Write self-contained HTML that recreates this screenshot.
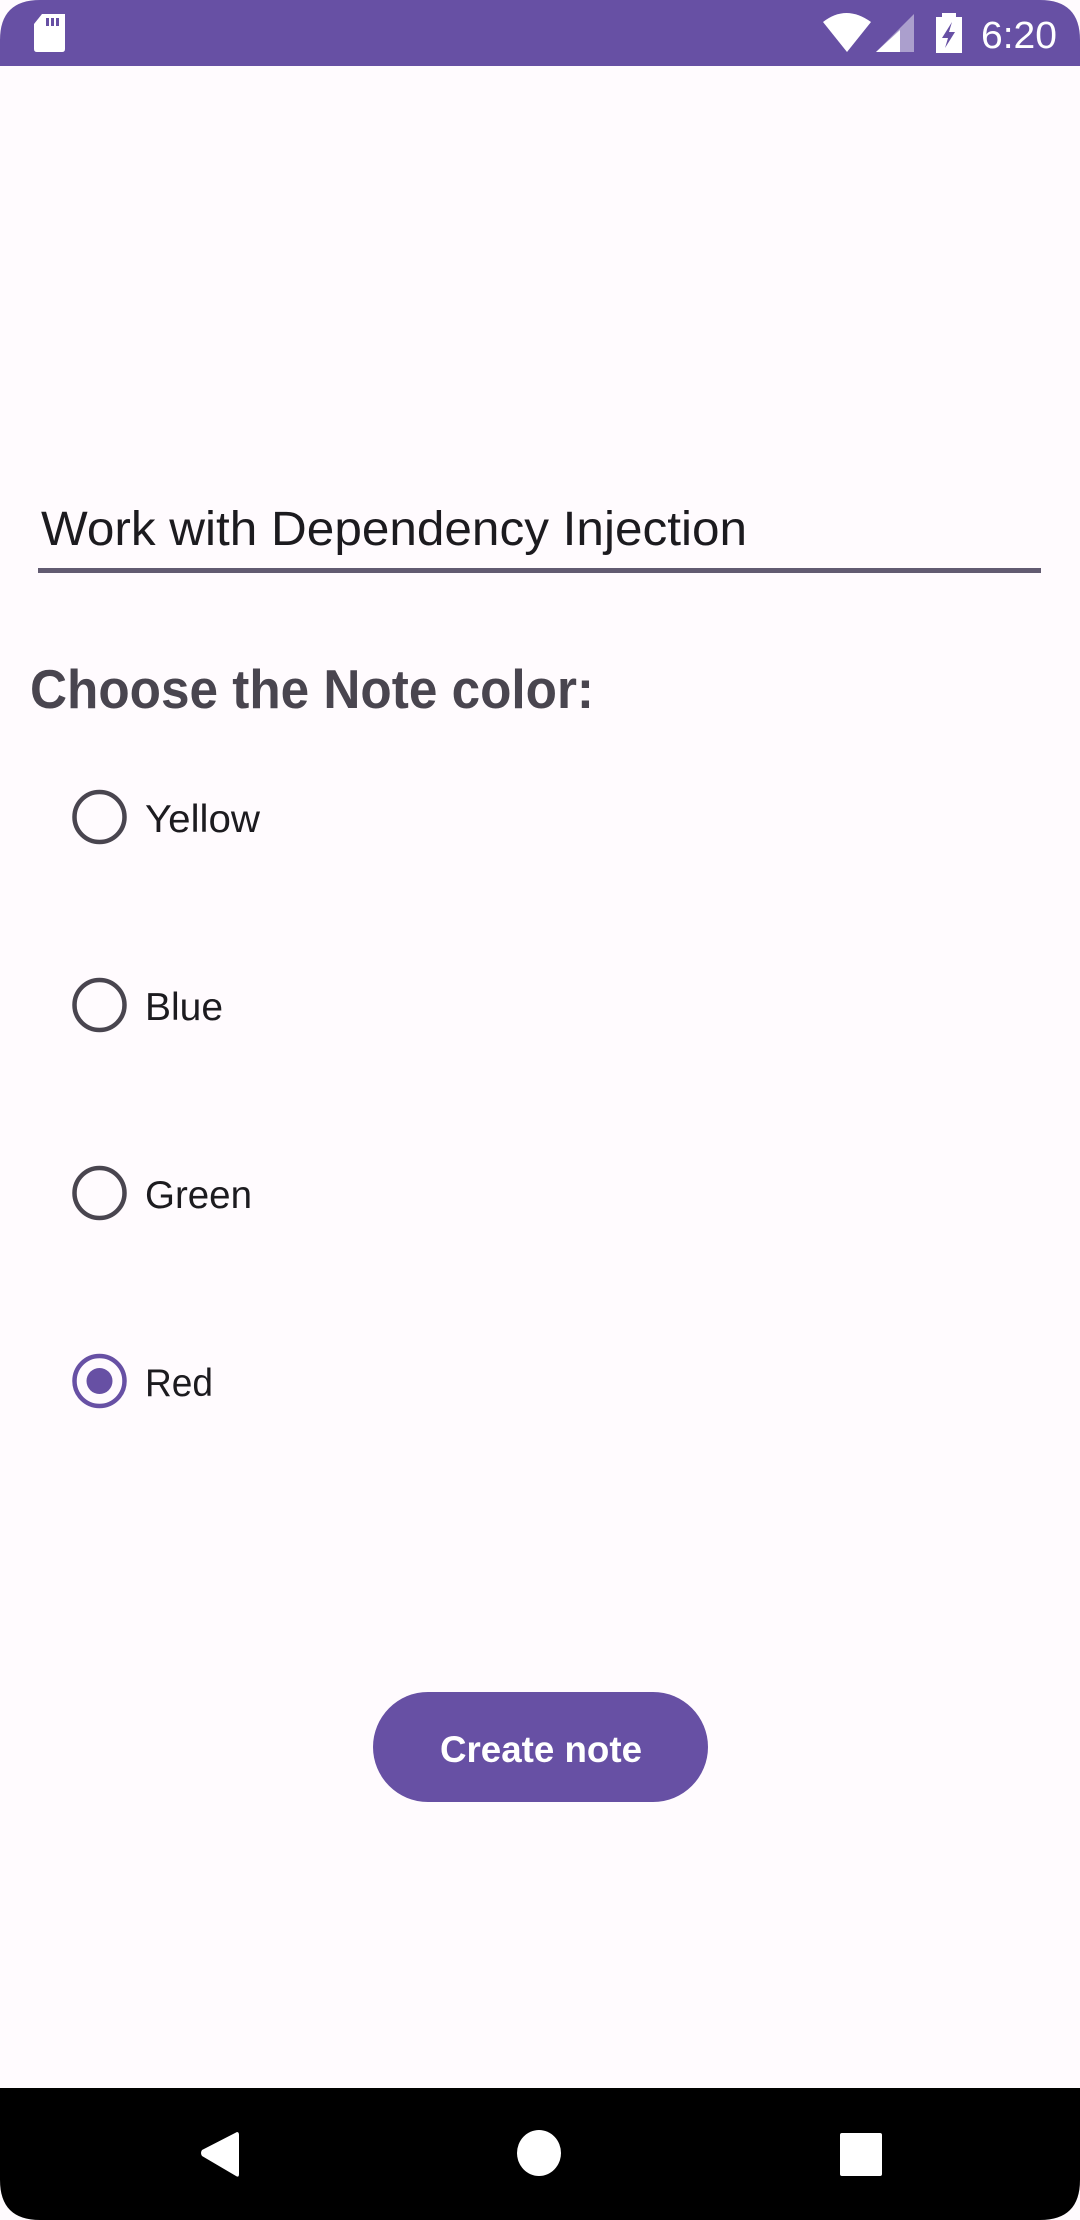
<!DOCTYPE html>
<html><head><meta charset="utf-8"><style>
html,body{margin:0;padding:0;background:#fffbfe;}
body{width:1080px;height:2220px;overflow:hidden;position:relative;}
svg{position:absolute;left:0;top:0;}
</style></head><body>
<svg width="1080" height="2220" viewBox="0 0 1080 2220" xmlns="http://www.w3.org/2000/svg">
<rect width="1080" height="2220" fill="#fffbfe"/>
<!-- status bar -->
<path d="M0 66 V40 Q0 0 40 0 H1040 Q1080 0 1080 40 V66 Z" fill="#6750a4"/>
<path d="M42 14 H65 V49 Q65 52 62 52 H37 Q34 52 34 49 V24 Z" fill="#fff"/>
<rect x="46" y="18" width="3" height="8" fill="#6750a4"/><rect x="51" y="18" width="3" height="8" fill="#6750a4"/><rect x="56" y="18" width="3" height="8" fill="#6750a4"/>
<path d="M823 22 Q846 4 871 22 L847 52 Z" fill="#fff"/>
<path d="M914 14 V52 H876 Z" fill="#fff" opacity="0.45"/>
<path d="M900 30 V52 H876 Z" fill="#fff"/>
<rect x="942" y="13" width="14" height="4" fill="#fff"/>
<rect x="936" y="17" width="26" height="36" fill="#fff"/>
<path d="M952 22 L942 38 H948 L945 48 L955 32 H949 Z" fill="#6750a4"/>
<text x="981" y="48" font-family="Liberation Sans, sans-serif" font-size="38" fill="#fff" textLength="76" lengthAdjust="spacingAndGlyphs">6:20</text>
<!-- text field -->
<text x="41" y="545" font-family="Liberation Sans, sans-serif" font-size="48" fill="#1c1b1f" textLength="706" lengthAdjust="spacingAndGlyphs">Work with Dependency Injection</text>
<rect x="38" y="568" width="1003" height="5" fill="#625b71"/>
<!-- heading -->
<text x="30" y="708" font-family="Liberation Sans, sans-serif" font-weight="bold" font-size="55" fill="#49454f" textLength="564" lengthAdjust="spacingAndGlyphs">Choose the Note color:</text>
<!-- radios -->
<g fill="none" stroke="#49454f" stroke-width="4.5">
<circle cx="99.5" cy="817" r="25"/>
<circle cx="99.5" cy="1005" r="25"/>
<circle cx="99.5" cy="1193" r="25"/>
</g>
<circle cx="99.5" cy="1381" r="25" fill="none" stroke="#6750a4" stroke-width="4.5"/>
<circle cx="99.5" cy="1381" r="13" fill="#6750a4"/>
<g font-family="Liberation Sans, sans-serif" font-size="39" fill="#1c1b1f">
<text x="145" y="832" textLength="115" lengthAdjust="spacingAndGlyphs">Yellow</text>
<text x="145" y="1020" textLength="78" lengthAdjust="spacingAndGlyphs">Blue</text>
<text x="145" y="1208" textLength="107" lengthAdjust="spacingAndGlyphs">Green</text>
<text x="145" y="1396" textLength="68" lengthAdjust="spacingAndGlyphs">Red</text>
</g>
<!-- button -->
<rect x="373" y="1692" width="335" height="110" rx="55" fill="#6750a4"/>
<text x="440" y="1762" font-family="Liberation Sans, sans-serif" font-weight="bold" font-size="37" fill="#fff" textLength="202" lengthAdjust="spacingAndGlyphs">Create note</text>
<!-- nav bar -->
<path d="M0 2088 H1080 V2180 Q1080 2220 1040 2220 H40 Q0 2220 0 2180 Z" fill="#000"/>
<path d="M237 2132 Q239 2132 239 2135 V2174 Q239 2178 236 2176 L202 2156 Q200 2153 202 2150 Z" fill="#fff"/>
<ellipse cx="539" cy="2153" rx="22" ry="23" fill="#fff"/>
<rect x="840" y="2133" width="42" height="43" rx="2" fill="#fff"/>
</svg>
</body></html>
